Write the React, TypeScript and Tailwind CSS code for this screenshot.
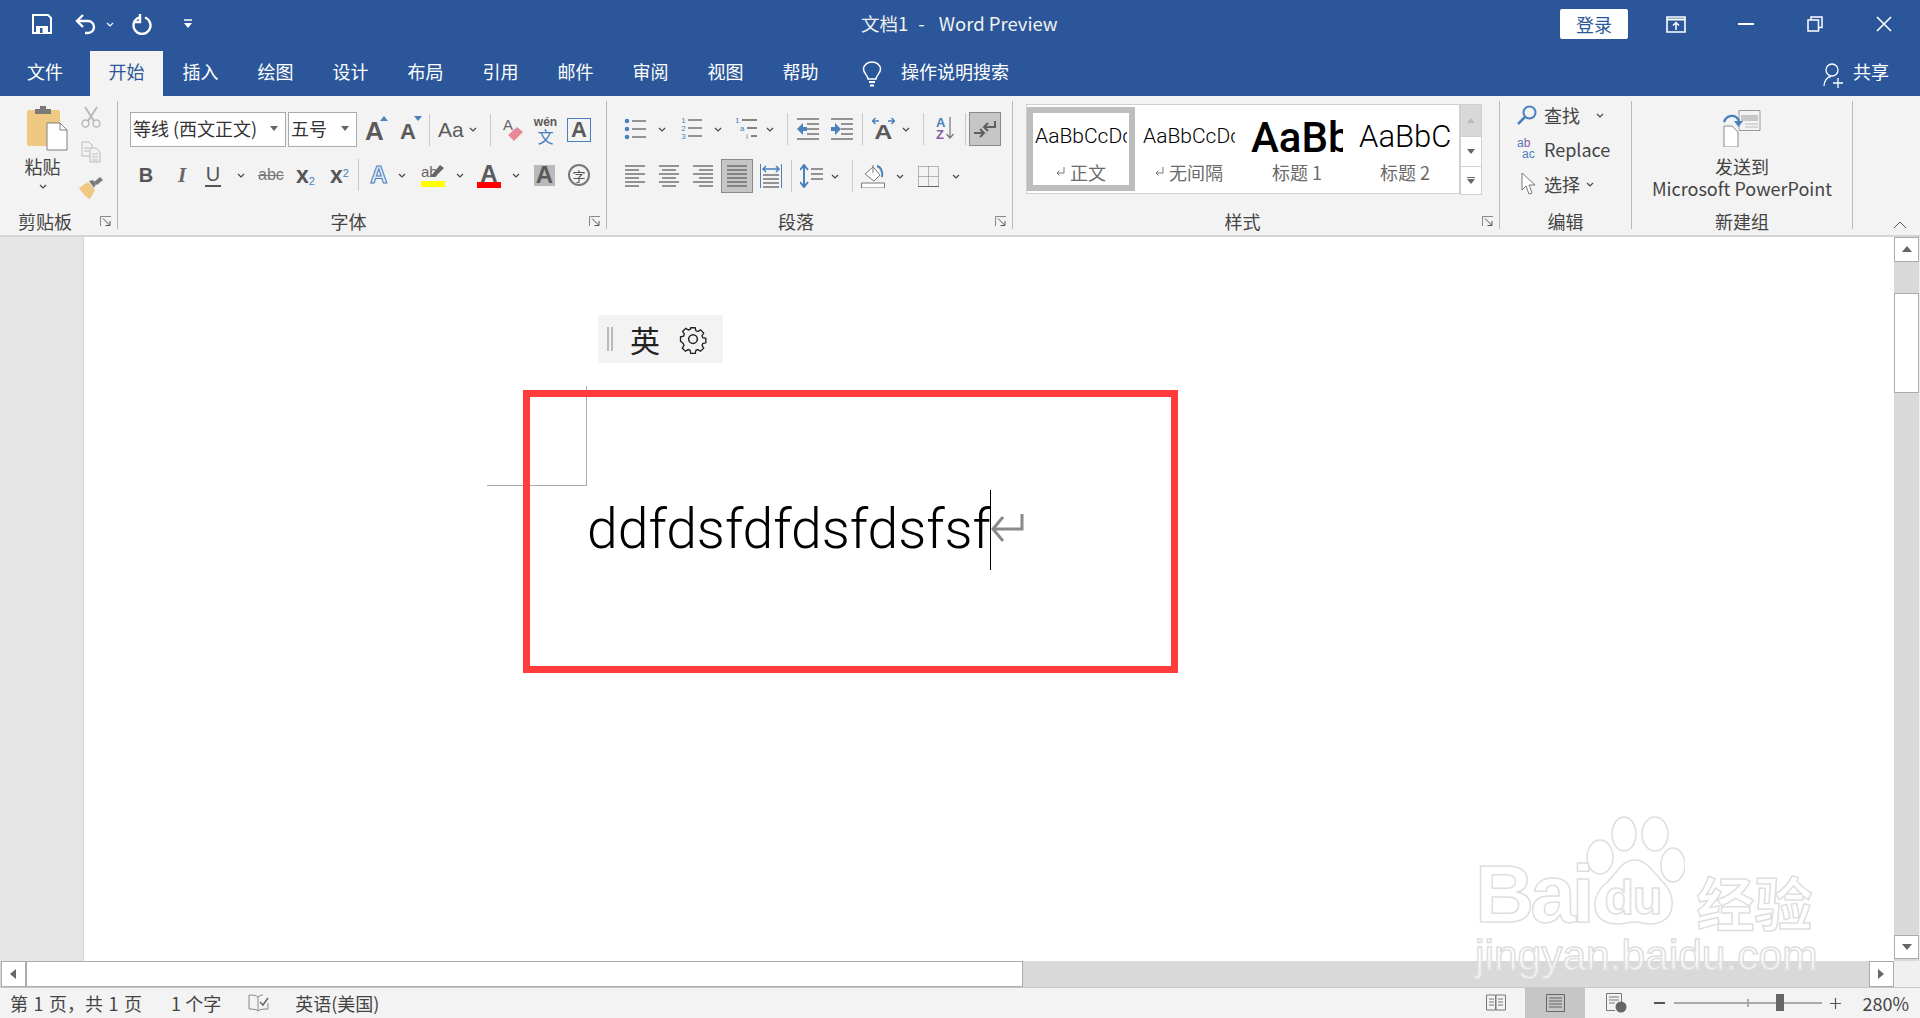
import React from 'react';

/* --- small shared bits --- */
const G = '#5f5f5f';
const B = '#4a80bc';
const LATIN = "font-['Liberation_Sans',sans-serif]";
const THIN = "font-['Roboto',sans-serif] font-light";

function Caret({ className = '' }: { className?: string }) {
  return (
    <svg width="8" height="5" viewBox="0 0 8 5" className={`shrink-0 ${className}`}>
      <path d="M1 1l3 3 3-3" fill="none" stroke="#444" strokeWidth="1.2" />
    </svg>
  );
}

function VSep({ className = '' }: { className?: string }) {
  return <div className={`w-px h-[32px] bg-[#c8c8c8] shrink-0 ${className}`} />;
}

function Lines({ w, ys, x = 0, color = G }: { w: number; ys: number[]; x?: number; color?: string }) {
  return (
    <>
      {ys.map((y) => (
        <path key={y} d={`M${x} ${y}h${w}`} stroke={color} strokeWidth="1.3" />
      ))}
    </>
  );
}

function Launcher() {
  return (
    <svg width="12" height="11" viewBox="0 0 12 11" className="shrink-0">
      <path d="M.5 10V.5H11" fill="none" stroke="#888" />
      <path d="M3 2.5l6.5 6.5M5.5 9.5H10V5" fill="none" stroke="#555" />
    </svg>
  );
}

/* --- ribbon group with its caption row --- */
function Group({
  width,
  label,
  launcher,
  children,
}: {
  width: string;
  label: string;
  launcher?: boolean;
  children: React.ReactNode;
}) {
  return (
    <div className={`flex flex-col shrink-0 ${width}`}>
      <div className="h-[115px]">{children}</div>
      <div className="h-[20px] flex items-center">
        <div className={`flex-1 text-center text-[18px] leading-[20px] text-[#444] ${launcher ? 'pr-[10px]' : ''}`}>{label}</div>
        {launcher && (
          <div className="w-[17px] flex">
            <Launcher />
          </div>
        )}
      </div>
    </div>
  );
}

function GroupSep() {
  return <div className="w-px h-[128px] mt-[5px] bg-[#b9b9b9] shrink-0" />;
}

/* --- title bar --- */
function TitleBar() {
  return (
    <div className="h-[51px] pb-[3px] flex items-center relative text-white">
      <svg width="20" height="20" viewBox="0 0 20 20" className="ml-[32px]">
        <path d="M1 1h15l3 3v15H1z" fill="none" stroke="#fff" strokeWidth="2" />
        <path d="M4 12h12v7H4z" fill="#fff" />
        <path d="M8 14h2.5v5H8z" fill="#2b579a" />
      </svg>
      <svg width="22" height="22" viewBox="0 0 22 22" className="ml-[22px]">
        <path d="M9 2L3 8l6 6M3 8h11a6 6 0 0 1 0 12h-3" fill="none" stroke="#fff" strokeWidth="2.4" />
      </svg>
      <Caret className="ml-[10px] [&>path]:stroke-white" />
      <svg width="22" height="22" viewBox="0 0 22 22" className="ml-[18px]">
        <path d="M7 4.500a8.500 8.500 0 1 0 6 0" fill="none" stroke="#fff" strokeWidth="2.4" />
        <path d="M8 1v8H1" fill="none" stroke="#fff" strokeWidth="2.400" />
      </svg>
      <svg width="10" height="10" viewBox="0 0 10 10" className="ml-[29px]">
        <path d="M1 1h8" stroke="#fff" strokeWidth="1.500" />
        <path d="M1 4h8L5 9z" fill="#fff" />
      </svg>
      <div className="flex-1" />
      <div className="absolute left-[861px] top-[10px] text-[18.500px] leading-[26px] whitespace-pre text-[#f2f2f2] flex">
        <span>文档1</span>
        <span className="ml-[10px]">-</span>
        <span className="ml-[14px]">Word Preview</span>
      </div>
      <div className="w-[68px] h-[30px] bg-white rounded-[2px] text-[#2b579a] text-[18px] leading-[30px] text-center">登录</div>
      <svg width="20" height="17" viewBox="0 0 20 17" className="ml-[38px]">
        <path d="M1 1h18v15H1z" fill="none" stroke="#fff" strokeWidth="1.600" />
        <path d="M1 3.500h18" stroke="#fff" strokeWidth="2" />
        <path d="M10 14V7M7 9.500l3-3 3 3" fill="none" stroke="#fff" strokeWidth="1.500" />
      </svg>
      <div className="ml-[52px] w-[16px] h-[2px] bg-white" />
      <svg width="16" height="16" viewBox="0 0 16 16" className="ml-[53px]">
        <path d="M1 4h10.500v11H1zM4 4V1h11v10.500h-3.500" fill="none" stroke="#fff" strokeWidth="1.500" />
      </svg>
      <svg width="16" height="16" viewBox="0 0 16 16" className="ml-[53px] mr-[28px]">
        <path d="M1 1l14 14M15 1L1 15" stroke="#fff" strokeWidth="1.600" />
      </svg>
    </div>
  );
}

/* --- tabs row --- */
const TABS = ['插入', '绘图', '设计', '布局', '引用', '邮件', '审阅', '视图', '帮助'];

function TabRow() {
  return (
    <div className="h-[45px] flex text-white text-[18px] leading-[40px]">
      <div className="w-[90px] text-center">文件</div>
      <div className="w-[73px] bg-[#f3f3f3] text-[#2b579a] text-center">开始</div>
      {TABS.map((t) => (
        <div key={t} className="w-[75px] text-center">
          {t}
        </div>
      ))}
      <svg width="20" height="26" viewBox="0 0 20 26" className="ml-[24px] self-center">
        <path d="M6 18c0-4-4.500-5-4.500-10a8.500 7 0 0 1 17 0c0 5-4.500 6-4.500 10z" fill="none" stroke="#fff" strokeWidth="1.500" />
        <path d="M7 21h6M8 24.500h4" stroke="#fff" strokeWidth="1.800" />
      </svg>
      <div className="ml-[19px]">操作说明搜索</div>
      <div className="flex-1" />
      <svg width="20" height="26" viewBox="0 0 20 26" className="self-center mt-[3px]">
        <circle cx="9" cy="8" r="6" fill="none" stroke="#fff" strokeWidth="1.300" />
        <path d="M1 24c0-5 3-9 7-9.500M10 21h10M15 16v10" fill="none" stroke="#fff" strokeWidth="1.300" />
      </svg>
      <div className="ml-[10px] mr-[31px]">共享</div>
    </div>
  );
}

/* --- clipboard --- */
function Clipboard() {
  return (
    <div className="flex">
      <div className="ml-[6px] w-[73px] flex flex-col items-center">
        <svg width="42" height="45" viewBox="0 0 42 45" className="mt-[10px] ml-[8px]">
          <path d="M1 6a2 2 0 0 1 2-2h29a2 2 0 0 1 2 2v34H3a2 2 0 0 1-2-2z" fill="#efc981" />
          <path d="M9 3h5V0h6v3h5v5H9z" fill="#7a7a7a" />
          <path d="M21 17h13l7 7v20H21z" fill="#fff" stroke="#7f7f7f" />
          <path d="M34 17v7h7" fill="none" stroke="#7f7f7f" />
        </svg>
        <div className="mt-[4px] text-[18px] leading-[22px] text-[#444]">粘贴</div>
        <Caret className="mt-[7px]" />
      </div>
      <div className="w-[24px] flex flex-col items-center">
        <svg width="20" height="22" viewBox="0 0 20 22" className="mt-[10px]">
          <path d="M4 1l9 14M16 1L7 15" stroke="#b9b9b9" strokeWidth="2" />
          <circle cx="4.500" cy="17.500" r="3.500" fill="none" stroke="#b9b9b9" strokeWidth="1.500" />
          <circle cx="15.500" cy="17.500" r="3.500" fill="none" stroke="#b9b9b9" strokeWidth="1.500" />
        </svg>
        <svg width="20" height="22" viewBox="0 0 20 22" className="mt-[13px]">
          <path d="M1 1h7l3 3v11H1z" fill="#f3f3f3" stroke="#b9b9b9" />
          <path d="M9 7h6l4 4v10H9z" fill="#f3f3f3" stroke="#b9b9b9" />
          <path d="M3 7h5M3 10h5M11 13h6M11 16h6M11 19h6" stroke="#b9b9b9" />
        </svg>
        <svg width="24" height="22" viewBox="0 0 24 22" className="mt-[14px]">
          <path d="M0 11l9-6 7 8-5 9c-2 0-8-6-11-11z" fill="#efc981" />
          <path d="M10 4l4-1 3 4-2 4z" fill="#7a7a7a" />
          <path d="M15 5l6-5 3 3-6 5z" fill="#7a7a7a" />
        </svg>
      </div>
    </div>
  );
}

/* --- font group --- */
function BigA({ className = '' }: { className?: string }) {
  return <span className={`${LATIN} font-bold leading-none text-[#5a5a5a] ${className}`}>A</span>;
}

function FontGroup() {
  return (
    <div>
      <div className="mt-[16px] h-[35px] flex items-center">
        <div className="ml-[12px] w-[156px] h-[35px] pb-[2px] bg-white border border-[#ababab] flex items-center pl-[2px] pr-[7px] text-[18px] text-[#333]">
          <span className="flex-1 whitespace-nowrap">等线 (西文正文)</span>
          <svg width="8" height="5"><path d="M0 0h8L4 5z" fill="#666" /></svg>
        </div>
        <div className="ml-[2px] w-[69px] h-[35px] pb-[2px] bg-white border border-[#ababab] flex items-center pl-[2px] pr-[7px] text-[18px] text-[#333]">
          <span className="flex-1">五号</span>
          <svg width="8" height="5"><path d="M0 0h8L4 5z" fill="#666" /></svg>
        </div>
        <div className="ml-[8px] w-[20px] h-[24px] relative">
          <BigA className="text-[26px] block" />
          <svg width="8" height="5" className="absolute left-[15px] top-[-2px]"><path d="M0 5h8L4 0z" fill={B} /></svg>
        </div>
        <div className="ml-[15px] w-[20px] h-[24px] relative">
          <BigA className="text-[22px] block mt-[3px]" />
          <svg width="8" height="5" className="absolute left-[14px] top-[-2px]"><path d="M0 0h8L4 5z" fill={B} /></svg>
        </div>
        <VSep className="ml-[9px]" />
        <div className={`ml-[8px] w-[25px] ${LATIN} text-[21px] leading-none text-[#5a5a5a] whitespace-nowrap`}>Aa</div>
        <Caret className="ml-[6px]" />
        <VSep className="ml-[13px]" />
        <div className="ml-[12px] w-[20px] h-[26px] relative">
          <span className={`${LATIN} text-[15px] leading-none text-[#666] block`}>A</span>
          <svg width="20" height="16" viewBox="0 0 20 16" className="absolute left-[1px] top-[9px]">
            <path d="M4 9l9-8 6 5-9 9z" fill="#e8899b" />
          </svg>
        </div>
        <div className="ml-[12px] w-[21px] flex flex-col items-center">
          <span className={`${LATIN} font-bold text-[12px] leading-[12px] text-[#5a5a5a]`}>wén</span>
          <span className="text-[16px] leading-[16px] text-[#4a80bc]">文</span>
        </div>
        <div className="ml-[11px] w-[24px] h-[24px] border border-[#4a80bc] flex items-center justify-center">
          <BigA className="text-[22px]" />
        </div>
      </div>
      <div className="mt-[10px] h-[36px] flex items-center">
        <span className={`ml-[20px] w-[16px] text-center ${LATIN} font-bold text-[20px] leading-none text-[#555]`}>B</span>
        <span className="ml-[20px] w-[16px] text-center font-['Liberation_Serif',serif] italic font-bold text-[21px] leading-none text-[#666]">I</span>
        <span className={`ml-[15px] w-[16px] text-center ${LATIN} text-[20px] leading-[22px] text-[#555] border-b-2 border-[#555]`}>U</span>
        <Caret className="ml-[16px]" />
        <span className={`ml-[13px] w-[25px] ${LATIN} text-[16px] leading-none text-[#777] line-through`}>abc</span>
        <span className={`ml-[13px] w-[20px] ${LATIN} font-bold text-[23px] leading-none text-[#555] whitespace-nowrap`}>
          x<sub className="text-[11px] font-normal text-[#4a80bc]">2</sub>
        </span>
        <span className={`ml-[14px] w-[19px] ${LATIN} font-bold text-[23px] leading-none text-[#555] whitespace-nowrap`}>
          x<sup className="text-[11px] font-normal text-[#4a80bc]">2</sup>
        </span>
        <VSep className="ml-[9px]" />
        <span className={`ml-[11px] w-[17px] ${LATIN} font-bold text-[24px] leading-none text-[#dceaf8] [-webkit-text-stroke:1px_#4a80bc]`}>A</span>
        <Caret className="ml-[11px]" />
        <div className="ml-[15px] w-[24px] flex flex-col relative">
          <span className={`${LATIN} text-[15px] leading-[18px] text-[#666]`}>ab</span>
          <svg width="15" height="15" viewBox="0 0 15 15" className="absolute left-[9px] top-0">
            <path d="M0 14L10 2l4 3-9 9z" fill="#666" />
          </svg>
          <div className="h-[6px] bg-[#ffff00]" />
        </div>
        <Caret className="ml-[11px]" />
        <div className="ml-[13px] w-[24px] flex flex-col items-center">
          <BigA className="text-[24px] h-[20px]" />
          <div className="w-full h-[6px] bg-[#ff0000]" />
        </div>
        <Caret className="ml-[11px]" />
        <div className="ml-[14px] w-[21px] h-[21px] bg-[#b9b9b9] flex items-center justify-center">
          <BigA className="text-[24px]" />
        </div>
        <div className="ml-[13px] w-[22px] h-[22px] rounded-full border-2 border-[#777] flex items-center justify-center text-[13px] leading-none text-[#555]">字</div>
      </div>
    </div>
  );
}

/* --- paragraph group icons --- */
function Bullets() {
  return (
    <svg width="22" height="22" viewBox="0 0 22 22">
      <circle cx="3" cy="3" r="2.300" fill={B} />
      <circle cx="3" cy="11" r="2.300" fill={B} />
      <circle cx="3" cy="19" r="2.300" fill={B} />
      <Lines x={8} w={14} ys={[3, 11, 19]} />
    </svg>
  );
}

function Numbered() {
  return (
    <div className={`relative w-[22px] h-[24px] ${LATIN} text-[8px] leading-[8px] text-[#4a80bc]`}>
      <div className="flex flex-col w-[7px] items-center">
        <span>1</span>
        <span>2</span>
        <span>3</span>
      </div>
      <svg width="22" height="24" viewBox="0 0 22 24" className="absolute inset-0">
        <Lines x={8} w={14} ys={[3, 11, 19]} />
      </svg>
    </div>
  );
}

function MultiLevel() {
  return (
    <div className={`relative w-[23px] h-[24px] ${LATIN} text-[8px] leading-[8px] text-[#4a80bc]`}>
      <span className="block">1</span>
      <span className="block pl-[5px]">a</span>
      <span className="block pl-[11px]">i</span>
      <svg width="23" height="24" viewBox="0 0 23 24" className="absolute inset-0">
        <path d="M7 3h15M12 11h10M16 19h6" stroke={G} strokeWidth="1.300" />
      </svg>
    </div>
  );
}

function Indent({ flip }: { flip?: boolean }) {
  return (
    <svg width="22" height="22" viewBox="0 0 22 22">
      <Lines x={0} w={22} ys={[1, 21]} />
      <Lines x={10} w={12} ys={[6, 11, 16]} />
      {flip ? (
        <path d="M0 9h4V5l6 6-6 6v-4H0z" fill={B} />
      ) : (
        <path d="M10 9H6V5l-6 6 6 6v-4h4z" fill={B} />
      )}
    </svg>
  );
}

function Align({ kind }: { kind: 'l' | 'c' | 'r' | 'j' }) {
  const short = kind === 'j' ? 20 : 14;
  const x = kind === 'l' || kind === 'j' ? 0 : kind === 'c' ? 3 : 6;
  return (
    <svg width="20" height="22" viewBox="0 0 20 22">
      <Lines x={0} w={20} ys={[1, 9, 17]} />
      <Lines x={x} w={short} ys={[5, 13, 21]} />
    </svg>
  );
}

function ParagraphGroup() {
  return (
    <div>
      <div className="mt-[15px] h-[36px] flex items-center">
        <div className="ml-[17px]"><Bullets /></div>
        <Caret className="ml-[12px]" />
        <div className="ml-[14px]"><Numbered /></div>
        <Caret className="ml-[12px]" />
        <div className="ml-[13px]"><MultiLevel /></div>
        <Caret className="ml-[8px]" />
        <VSep className="ml-[13px]" />
        <div className="ml-[9px]"><Indent /></div>
        <div className="ml-[12px]"><Indent flip /></div>
        <VSep className="ml-[9px]" />
        <div className="ml-[9px] w-[23px] flex flex-col items-center">
          <svg width="23" height="8" viewBox="0 0 23 8">
            <path d="M7 4H1M3.500 1L.5 4l3 3M16 4h6M19.500 1l3 3-3 3" fill="none" stroke={B} strokeWidth="1.500" />
          </svg>
          <BigA className="text-[20px] -mt-[3px] scale-x-125" />
        </div>
        <Caret className="ml-[7px]" />
        <VSep className="ml-[13px]" />
        <div className="ml-[12px] w-[19px] relative flex">
          <div className={`flex flex-col ${LATIN} font-bold text-[13px] leading-[12px]`}>
            <span className="text-[#4a80bc]">A</span>
            <span className="text-[#8a5aa8]">Z</span>
          </div>
          <svg width="8" height="22" viewBox="0 0 8 22" className="ml-[1px]">
            <path d="M4 0v21M.5 17L4 21l3.500-4" fill="none" stroke="#777" strokeWidth="1.200" />
          </svg>
        </div>
        <VSep className="ml-[10px]" />
        <div className="ml-[3px] w-[32px] h-[34px] bg-[#c6c6c6] border border-[#8a8a8a] flex items-center justify-center">
          <svg width="22" height="20" viewBox="0 0 22 20">
            <path d="M21 2v6H10M14 4l-4 4 4 4" fill="none" stroke={G} strokeWidth="2" />
            <path d="M0 14h10M6 10l4 4-4 4" fill="none" stroke={G} strokeWidth="2" />
          </svg>
        </div>
      </div>
      <div className="mt-[11px] h-[36px] flex items-center">
        <div className="ml-[18px]"><Align kind="l" /></div>
        <div className="ml-[14px]"><Align kind="c" /></div>
        <div className="ml-[14px]"><Align kind="r" /></div>
        <div className="ml-[8px] w-[32px] h-[34px] bg-[#c6c6c6] border border-[#8a8a8a] flex items-center justify-center">
          <Align kind="j" />
        </div>
        <svg width="22" height="24" viewBox="0 0 22 24" className="ml-[7px]">
          <path d="M.5 0v24M21.500 0v24" stroke={B} />
          <path d="M3 5h16M6 2L3 5l3 3M16 2l3 3-3 3" fill="none" stroke={B} strokeWidth="1.500" />
          <Lines x={3} w={16} ys={[11, 15, 19, 23]} />
        </svg>
        <VSep className="ml-[9px]" />
        <svg width="23" height="24" viewBox="0 0 23 24" className="ml-[8px]">
          <path d="M4 1v22M0 6l4-5 4 5M0 18l4 5 4-5" fill="none" stroke={B} strokeWidth="2" />
          <Lines x={11} w={12} ys={[5, 10, 15]} />
        </svg>
        <Caret className="ml-[8px]" />
        <VSep className="ml-[13px]" />
        <svg width="24" height="24" viewBox="0 0 24 24" className="ml-[8px]">
          <path d="M4 10l8-7 7 8-6 6z" fill="#fff" stroke="#777" />
          <path d="M12 1v8" stroke="#777" />
          <path d="M16 2c4 1 6 6 5 11" fill="none" stroke={B} strokeWidth="2" />
          <path d="M.5 19h23v5H.5z" fill="#fff" stroke="#777" />
        </svg>
        <Caret className="ml-[11px]" />
        <svg width="21" height="21" viewBox="0 0 21 21" className="ml-[14px]">
          <path d="M.5.5h20M.5.5v20M20.500.5v20M10.500.5v20M.5 10.500h20" fill="none" stroke="#777" strokeDasharray="1 1" />
          <path d="M0 20.500h21" stroke="#666" />
        </svg>
        <Caret className="ml-[13px]" />
      </div>
    </div>
  );
}

/* --- styles gallery --- */
function StyleCell({
  preview,
  label,
  mark,
  selected,
}: {
  preview: React.ReactNode;
  label: string;
  mark?: boolean;
  selected?: boolean;
}) {
  return (
    <div className={`w-[108px] h-[84px] shrink-0 flex flex-col items-center bg-white border-[6px] ${selected ? 'border-[#bdbdbd]' : 'border-white'}`}>
      <div className="w-[92px] h-[36px] mt-[6px] overflow-hidden flex items-center whitespace-nowrap">{preview}</div>
      <div className="mt-[5px] text-[18px] leading-[24px] text-[#6a6a6a] flex items-center whitespace-nowrap">
        {mark && (
          <svg width="9" height="10" viewBox="0 0 9 10" className="mr-[5px]">
            <path d="M8 0v6H1M3.500 3.500L1 6l2.500 2.500" fill="none" stroke="#777" />
          </svg>
        )}
        {label}
      </div>
    </div>
  );
}

function StylesGroup() {
  return (
    <div className="ml-[13px] mt-[8px] flex">
      <div className="w-[434px] h-[90px] bg-white border border-[#d0d0d0] flex pt-[2px] overflow-hidden">
        <StyleCell selected mark label="正文" preview={<span className={`${THIN} text-[21px] text-black`}>AaBbCcDc</span>} />
        <StyleCell mark label="无间隔" preview={<span className={`${THIN} text-[21px] text-black`}>AaBbCcDc</span>} />
        <StyleCell label="标题 1" preview={<span className="font-['Roboto',sans-serif] font-medium text-[42px] text-black">AaBb</span>} />
        <StyleCell label="标题 2" preview={<span className={`${THIN} text-[31px] text-black`}>AaBbC</span>} />
      </div>
      <div className="w-[22px] flex flex-col">
        <div className="h-[33px] bg-[#d8d8d8] border border-[#d0d0d0] flex items-center justify-center">
          <svg width="8" height="5"><path d="M0 5h8L4 0z" fill="#bbb" /></svg>
        </div>
        <div className="h-[29px] bg-white border-x border-[#d0d0d0] flex items-center justify-center">
          <svg width="8" height="5"><path d="M0 0h8L4 5z" fill="#666" /></svg>
        </div>
        <div className="h-[29px] bg-white border border-[#d0d0d0] flex flex-col items-center justify-center gap-[1px]">
          <div className="w-[8px] h-px bg-[#666]" />
          <svg width="8" height="5"><path d="M0 0h8L4 5z" fill="#666" /></svg>
        </div>
      </div>
    </div>
  );
}

/* --- editing + send to ppt --- */
function EditingGroup() {
  return (
    <div className="flex flex-col text-[18px] leading-[28px] text-[#444] pl-[17px] pt-[5px]">
      <div className="h-[28px] flex items-center">
        <svg width="20" height="20" viewBox="0 0 20 20">
          <circle cx="12.500" cy="7.500" r="6" fill="none" stroke={B} strokeWidth="2" />
          <path d="M8 12l-7 7" stroke={B} strokeWidth="2.500" />
        </svg>
        <span className="ml-[7px] w-[52px]">查找</span>
        <Caret />
      </div>
      <div className="h-[28px] mt-[6px] flex items-center">
        <div className={`w-[22px] ${LATIN} text-[12px] leading-[11px] whitespace-nowrap`}>
          <div className="text-[#4a80bc]">a<span className="text-[#8a5aa8]">b</span></div>
          <div className="text-[#4a80bc] pl-[5px]">ac</div>
        </div>
        <span className="ml-[5px]">Replace</span>
      </div>
      <div className="h-[28px] mt-[7px] flex items-center">
        <svg width="16" height="24" viewBox="0 0 16 24" className="ml-[4px]">
          <path d="M1 1v17l4-4 3 8 3-1-3-8h6z" fill="#fff" stroke="#777" />
        </svg>
        <span className="ml-[7px] w-[42px]">选择</span>
        <Caret />
      </div>
    </div>
  );
}

function SendGroup() {
  return (
    <div className="flex flex-col items-center pt-[14px] text-[18px] leading-[22px] text-[#444]">
      <svg width="38" height="37" viewBox="0 0 38 37">
        <path d="M16 .5h21v20H16z" fill="#f3f3f3" stroke="#9a9a9a" />
        <path d="M18 5h17v6H18z" fill="#c8c8c8" />
        <path d="M22 14h13M22 17h13" stroke="#bbb" />
        <path d="M1 16h8l6 6v15H1z" fill="#fff" stroke="#8a8a8a" />
        <path d="M1 12C4 4 13 4 16 11" fill="none" stroke={B} strokeWidth="2.400" />
        <path d="M11 11h9l-4.500 6z" fill={B} />
      </svg>
      <div className="mt-[8px]">发送到</div>
      <div className="whitespace-nowrap">Microsoft PowerPoint</div>
    </div>
  );
}

function Ribbon() {
  return (
    <div className="h-[141px] bg-[#f3f3f3] border-b-2 border-[#d4d4d4] flex relative">
      <Group width="w-[117px]" label="剪贴板" launcher>
        <Clipboard />
      </Group>
      <GroupSep />
      <Group width="w-[488px]" label="字体" launcher>
        <FontGroup />
      </Group>
      <GroupSep />
      <Group width="w-[405px]" label="段落" launcher>
        <ParagraphGroup />
      </Group>
      <GroupSep />
      <Group width="w-[486px]" label="样式" launcher>
        <StylesGroup />
      </Group>
      <GroupSep />
      <Group width="w-[131px]" label="编辑">
        <EditingGroup />
      </Group>
      <GroupSep />
      <Group width="w-[220px]" label="新建组">
        <SendGroup />
      </Group>
      <GroupSep />
      <svg width="14" height="8" viewBox="0 0 14 8" className="absolute right-[13px] top-[125px]">
        <path d="M1 7l6-6 6 6" fill="none" stroke="#555" />
      </svg>
    </div>
  );
}

/* --- scroll bits --- */
function ScrollBtn({ dir, className = '' }: { dir: 'up' | 'down' | 'left' | 'right'; className?: string }) {
  const d = { up: 'M0 6h10L5 0z', down: 'M0 0h10L5 6z', left: 'M6 0v10L0 5z', right: 'M0 0v10l6-5z' }[dir];
  return (
    <div className={`bg-white border border-[#ababab] flex items-center justify-center shrink-0 ${className}`}>
      <svg width="10" height="10" viewBox="0 0 10 10" className={dir === 'up' || dir === 'down' ? 'mt-[3px]' : 'ml-[2px]'}>
        <path d={d} fill="#666" />
      </svg>
    </div>
  );
}

/* --- document canvas --- */
function Canvas() {
  return (
    <div className="flex-1 bg-white relative">
      <div className="pl-[503px] pt-[253px] flex items-center">
        <span className={`${THIN} text-[55.300px] leading-[80px] text-black whitespace-nowrap`}>ddfdsfdfdsfdsfsf</span>
        <div className="w-px h-[80px] bg-black -ml-px" />
        <svg width="33" height="32" viewBox="0 0 33 32" className="-mt-[5px]">
          <path d="M31 2v15H2M12 5L2 17l10 12" fill="none" stroke="#8a8a8a" strokeWidth="3" />
        </svg>
      </div>

      {/* crop mark in the page corner */}
      <div className="absolute left-[403px] top-[149px] w-[100px] h-[100px] border-r border-b border-[#ababab]" />

      {/* floating IME bar */}
      <div className="absolute left-[514px] top-[78px] w-[125px] h-[48px] bg-[#f3f3f3] flex items-center">
        <div className="ml-[9px] w-[6px] h-[24px] border-x-2 border-[#b9b9b9]" />
        <span className="ml-[17px] text-[30px] leading-none text-[#222]">英</span>
        <svg width="30" height="30" viewBox="0 0 24 24" className="ml-[18px]">
          <circle cx="12" cy="12" r="3.500" fill="none" stroke="#222" strokeWidth="1.200" />
          <path
            d="M10 2h4l.6 2.700 1.700.7 2.400-1.500 2.800 2.800-1.500 2.400.7 1.700 2.700.6v4l-2.700.6-.7 1.700 1.500 2.400-2.800 2.800-2.400-1.500-1.700.7-.6 2.700h-4l-.6-2.700-1.700-.7-2.400 1.500-2.800-2.800 1.500-2.400-.7-1.700L.9 14v-4l2.700-.6.7-1.700-1.500-2.400 2.800-2.800 2.400 1.500 1.700-.7z"
            fill="none"
            stroke="#222"
            strokeWidth="1.200"
            transform="translate(1.200 1.200) scale(.9)"
          />
        </svg>
      </div>

      {/* red annotation */}
      <div className="absolute left-[439px] top-[153px] w-[655px] h-[283px] border-[7px] border-[#ff3b3b]" />
    </div>
  );
}

/* --- baidu watermark, laid over everything --- */
const WM = "text-white/70 [-webkit-text-stroke:1.500px_#dedede]";

function Watermark() {
  return (
    <div className="absolute left-[1475px] top-[812px] pointer-events-none">
      <div className="flex items-end h-[120px]">
        <span className={`${WM} ${LATIN} font-bold text-[82px] leading-[82px] tracking-[-4px] -mb-[3px]`}>Bai</span>
        <div className="relative w-[100px] h-[120px] -ml-[6px]">
          <svg width="100" height="120" viewBox="0 0 100 120" className="absolute inset-0">
            <g fill="#fff" fillOpacity=".7" stroke="#dedede" strokeWidth="1.500">
              <ellipse cx="15" cy="45" rx="13" ry="17" />
              <ellipse cx="39" cy="22" rx="12" ry="17" />
              <ellipse cx="70" cy="22" rx="13" ry="17" />
              <ellipse cx="88" cy="53" rx="12" ry="17" />
              <path d="M50 48c12 0 18 12 28 22 14 14 14 42-14 42-6 0-8-2-14-2s-10 2-18 2C6 112 4 86 20 72c12-10 16-24 30-24z" />
            </g>
          </svg>
          <span className={`${WM} ${LATIN} absolute left-[20px] top-[62px] font-bold text-[48px] leading-none tracking-[-1px]`}>du</span>
        </div>
        <span className={`${WM} font-bold text-[58px] leading-[62px] ml-[12px] whitespace-nowrap`}>经验</span>
      </div>
      <div className={`${WM} ${LATIN} text-[42.500px] leading-[44px] mt-[2px] whitespace-nowrap`}>jingyan.baidu.com</div>
    </div>
  );
}

export default function App() {
  return (
    <div className="w-[1920px] h-[1018px] overflow-hidden relative flex flex-col font-['Noto_Sans_CJK_SC',sans-serif]">
      <div className="bg-[#2b579a]">
        <TitleBar />
        <TabRow />
      </div>
      <Ribbon />

      <div className="h-[724px] flex">
        <div className="w-[84px] bg-[#e6e6e6] border-r border-[#d4d4d4]" />
        <Canvas />
        <div className="w-[26px] bg-[#f0f0f0]">
          <div className="w-[25px] h-full bg-[#d9d9d9] flex flex-col">
            <ScrollBtn dir="up" className="h-[25px]" />
            <div className="mt-[31px] h-[100px] bg-white border border-[#ababab]" />
            <div className="flex-1" />
            <ScrollBtn dir="down" className="h-[24px] mb-[2px]" />
          </div>
        </div>
      </div>

      <div className="h-[26px] bg-[#d9d9d9] flex items-stretch pl-px">
        <ScrollBtn dir="left" className="w-[25px]" />
        <div className="w-[997px] bg-white border border-[#ababab]" />
        <div className="flex-1" />
        <ScrollBtn dir="right" className="w-[25px]" />
        <div className="w-[26px] bg-[#f0f0f0]" />
      </div>

      <div className="h-[31px] bg-[#f3f3f3] border-t border-[#c8c8c8] flex items-center text-[18px] text-[#444]">
        <span className="ml-[10px] whitespace-pre [word-spacing:1.500px]">第 1 页，共 1 页</span>
        <span className="ml-[29px] whitespace-pre">1 个字</span>
        <svg width="21" height="18" viewBox="0 0 21 18" className="ml-[27px]">
          <path d="M10 3C8 1 4 1 1 1v14c3 0 7 0 9 2V3zM10 3c1-1 3-2 5-2M10 17c2-2 6-2 10-2V9" fill="none" stroke="#888" />
          <path d="M12 8l3 3 5-7" fill="none" stroke="#666" strokeWidth="1.500" />
        </svg>
        <span className="ml-[26px] whitespace-nowrap">英语(美国)</span>
        <div className="flex-1" />
        <svg width="20" height="18" viewBox="0 0 20 18">
          <path d="M.5 1h9v15h-9zM10 1h9.500v15H10z" fill="none" stroke="#777" />
          <path d="M3 5h5M3 8h5M3 11h5M12 5h5M12 8h5M12 11h5" stroke="#777" />
        </svg>
        <div className="ml-[19px] w-[60px] h-full bg-[#c6c6c6] flex items-center justify-center">
          <svg width="19" height="18" viewBox="0 0 19 18">
            <path d="M.5.500h18v17H.5z" fill="none" stroke="#666" />
            <path d="M3 4h13M3 7h13M3 10h13M3 13h13" stroke="#666" />
          </svg>
        </div>
        <svg width="21" height="20" viewBox="0 0 21 20" className="ml-[21px]">
          <path d="M.5.500h15V11M.5.500v17H9" fill="none" stroke="#777" />
          <path d="M3 4h10M3 7h10M3 10h6" stroke="#777" />
          <circle cx="15" cy="14" r="5.500" fill="#666" />
        </svg>
        <div className="ml-[27px] w-[11px] h-[2px] bg-[#555]" />
        <div className="ml-[9px] w-[148px] h-[2px] bg-[#a9a9a9] flex relative">
          <div className="absolute left-[73px] -top-[3px] w-[2px] h-[8px] bg-[#a9a9a9]" />
          <div className="absolute left-[102px] -top-[8px] w-[8px] h-[17px] bg-[#666]" />
        </div>
        <svg width="11" height="11" viewBox="0 0 11 11" className="ml-[8px]">
          <path d="M0 5.500h11M5.500 0v11" stroke="#555" strokeWidth="1.200" />
        </svg>
        <span className="ml-[21px] mr-[11px] whitespace-nowrap">280%</span>
      </div>

      <Watermark />
    </div>
  );
}
